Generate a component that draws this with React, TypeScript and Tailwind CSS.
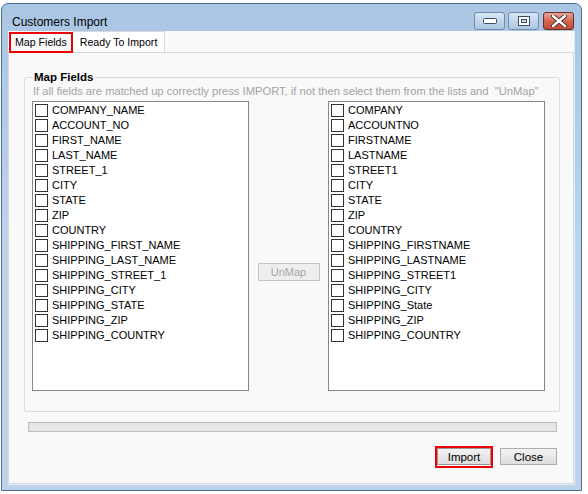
import React from 'react';

const leftFields = [
  'COMPANY_NAME', 'ACCOUNT_NO', 'FIRST_NAME', 'LAST_NAME', 'STREET_1', 'CITY', 'STATE', 'ZIP', 'COUNTRY',
  'SHIPPING_FIRST_NAME', 'SHIPPING_LAST_NAME', 'SHIPPING_STREET_1', 'SHIPPING_CITY', 'SHIPPING_STATE',
  'SHIPPING_ZIP', 'SHIPPING_COUNTRY',
];

const rightFields = [
  'COMPANY', 'ACCOUNTNO', 'FIRSTNAME', 'LASTNAME', 'STREET1', 'CITY', 'STATE', 'ZIP', 'COUNTRY',
  'SHIPPING_FIRSTNAME', 'SHIPPING_LASTNAME', 'SHIPPING_STREET1', 'SHIPPING_CITY', 'SHIPPING_State',
  'SHIPPING_ZIP', 'SHIPPING_COUNTRY',
];

function FieldList({ items }: { items: string[] }) {
  return (
    <div className="w-[217px] h-[290px] border border-[#828790] bg-white pt-[1px] pl-[2px]">
      {items.map((item) => (
        <label key={item} className="flex items-center h-[15px] gap-[4px]">
          <span className="w-[13px] h-[13px] border border-[#333] bg-white shrink-0" />
          <span className="text-[11px] leading-[15px] text-black">{item}</span>
        </label>
      ))}
    </div>
  );
}

function CaptionButton({ kind }: { kind: 'min' | 'max' | 'close' }) {
  const isClose = kind === 'close';
  return (
    <div
      className={`w-[31px] h-[18px] rounded-[3px] border flex items-center justify-center ${
        isClose
          ? 'border-[#6e2b2b] bg-gradient-to-b from-[#e8a493] via-[#d3664f] to-[#c24a36]'
          : 'border-[#6f8bae] bg-gradient-to-b from-[#dce8f5] via-[#c2d5ea] to-[#aec6e2]'
      }`}
    >
      {kind === 'min' && (
        <svg width="14" height="6" viewBox="0 0 14 6">
          <rect x="0.5" y="0.5" width="13" height="5" rx="1" fill="#fff" stroke="#3b4d66" />
        </svg>
      )}
      {kind === 'max' && (
        <svg width="12" height="10" viewBox="0 0 12 10">
          <rect x="0.5" y="0.5" width="11" height="9" fill="#fff" stroke="#3b4d66" />
          <rect x="3.5" y="3.5" width="5" height="3" fill="#c8d8ea" stroke="#3b4d66" />
        </svg>
      )}
      {isClose && (
        <svg width="16" height="12" viewBox="0 0 16 12">
          <path d="M2 1 L14 11 M14 1 L2 11" stroke="#3a2020" strokeWidth="4.2" strokeLinecap="round" />
          <path d="M2 1 L14 11 M14 1 L2 11" stroke="#fff" strokeWidth="2.4" strokeLinecap="round" />
        </svg>
      )}
    </div>
  );
}

export default function App() {
  return (
    <div
      className="w-[588px] h-[494px] bg-white pt-[3px] pl-[1px] overflow-hidden"
      style={{ fontFamily: '"Liberation Sans", Arial, sans-serif' }}
    >
      {/* window frame */}
      <div className="w-[581px] h-[488px] rounded-t-[7px] border border-[#4e6e94] bg-gradient-to-b from-[#aac6e4] via-[#bcd3ec] to-[#bcd3ea] flex flex-col px-[6px] pb-[5px]">
        <div className="h-[27px] flex justify-between">
          <span className="text-[12px] text-black pl-[4px] pt-[11px] leading-[14px]">Customers Import</span>
          <div className="flex pt-[8px] gap-[3px] pr-[1px]">
            <CaptionButton kind="min" />
            <CaptionButton kind="max" />
            <div className="ml-[1px]">
              <CaptionButton kind="close" />
            </div>
          </div>
        </div>

        {/* client area */}
        <div className="flex-1 bg-[#fafafa] border-r border-b border-[#e3ecf5] flex flex-col">
          <div className="h-[21px] flex items-end text-[10.6px] leading-[13px] text-black">
            <div className="ml-[1px] mb-[-1px] h-[21px] border-2 border-[#ee0000] bg-[#fafafa] flex items-center px-[4px] relative z-10">
              Map Fields
            </div>
            <div className="h-[21px] bg-white border-t border-r border-[#d9d9d9] flex items-center px-[7px]">
              Ready To Import
            </div>
          </div>

          {/* tab page */}
          <div className="flex-1 border border-[#d9d9d9] bg-[#f9f9f9] flex flex-col">
            <fieldset className="ml-[15px] mt-[17px] w-[536px] h-[342px] border border-[#dcdcdc] rounded-[2px] px-[7px]">
              <legend className="ml-[1px] px-[1px] text-[11.5px] font-bold leading-[14px] text-black">Map Fields</legend>
              <p className="text-[11.2px] leading-[13px] text-[#a3a3a3] whitespace-nowrap mt-[1px] ml-[1px]">
                If all fields are matched up correctly press IMPORT, if not then select them from the lists and&nbsp; "UnMap"
              </p>
              <div className="flex mt-[3px]">
                <FieldList items={leftFields} />
                <div className="w-[79px] flex justify-center">
                  <button className="mt-[162px] w-[62px] h-[18px] border border-[#c4c4c4] bg-[#eeeeee] text-[11px] text-[#a8a8a8] leading-[14px]">
                    UnMap
                  </button>
                </div>
                <FieldList items={rightFields} />
              </div>
            </fieldset>

            <div className="ml-[19px] mt-[10px] w-[529px] h-[10px] border border-[#bcbcbc] bg-[#e6e6e6]" />

            <div className="flex justify-end items-center mt-[14px] mr-[16px] gap-[7px] text-[11.5px] text-black">
              <div className="border-2 border-[#ee0000] p-0">
                <button className="w-[54px] h-[17px] border border-[#9a9a9a] bg-gradient-to-b from-[#f2f2f2] to-[#dddddd] leading-[14px]">
                  Import
                </button>
              </div>
              <button className="w-[57px] h-[17px] border border-[#adadad] bg-gradient-to-b from-[#f2f2f2] to-[#dddddd] leading-[14px]">
                Close
              </button>
            </div>
          </div>
        </div>
      </div>
    </div>
  );
}
